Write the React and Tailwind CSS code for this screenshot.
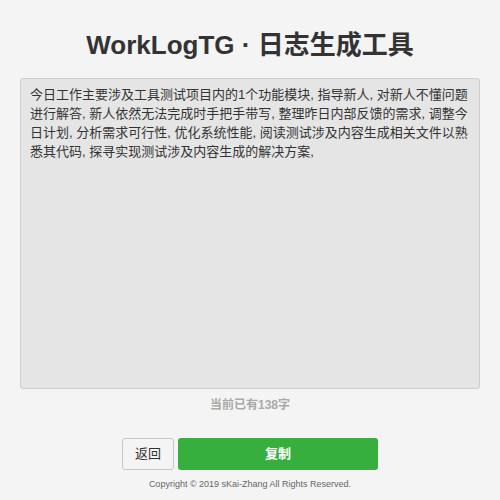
export default function App() {
  const text = "今日工作主要涉及工具测试项目内的1个功能模块, 指导新人, 对新人不懂问题进行解答, 新人依然无法完成时手把手带写, 整理昨日内部反馈的需求, 调整今日计划, 分析需求可行性, 优化系统性能, 阅读测试涉及内容生成相关文件以熟悉其代码, 探寻实现测试涉及内容生成的解决方案,";
  return (
    <div className="w-[500px] h-[500px] bg-[#f4f4f4] flex flex-col items-center font-['Liberation_Sans','Noto_Sans_CJK_SC',sans-serif] text-[#333]">
      <h1 className="mt-[29px] h-[32px] text-[26px] leading-[32px] font-bold text-[#333]">WorkLogTG · 日志生成工具</h1>
      <div className="mt-[17px] w-[460px] h-[311px] bg-[#e5e5e5] border border-[#cfcfcf] rounded-[3px] px-[9px] pt-[6px] text-[13px] leading-[19px] text-[#333]">
        {text}
      </div>
      <div className="mt-[8px] text-[12px] leading-[16px] font-bold text-[#aaa]">当前已有138字</div>
      <div className="mt-[25px] flex gap-[4px]">
        <button className="w-[52px] h-[32px] border border-[#c8c8c8] rounded-[3px] bg-[#f4f4f4] text-[13px] text-[#333]">返回</button>
        <button className="w-[200px] h-[32px] rounded-[3px] bg-[#37af3f] text-[13px] font-bold text-white">复制</button>
      </div>
      <div className="mt-[8px] text-[9px] leading-[12px] text-[#666]">Copyright © 2019 sKai-Zhang All Rights Reserved.</div>
    </div>
  );
}
